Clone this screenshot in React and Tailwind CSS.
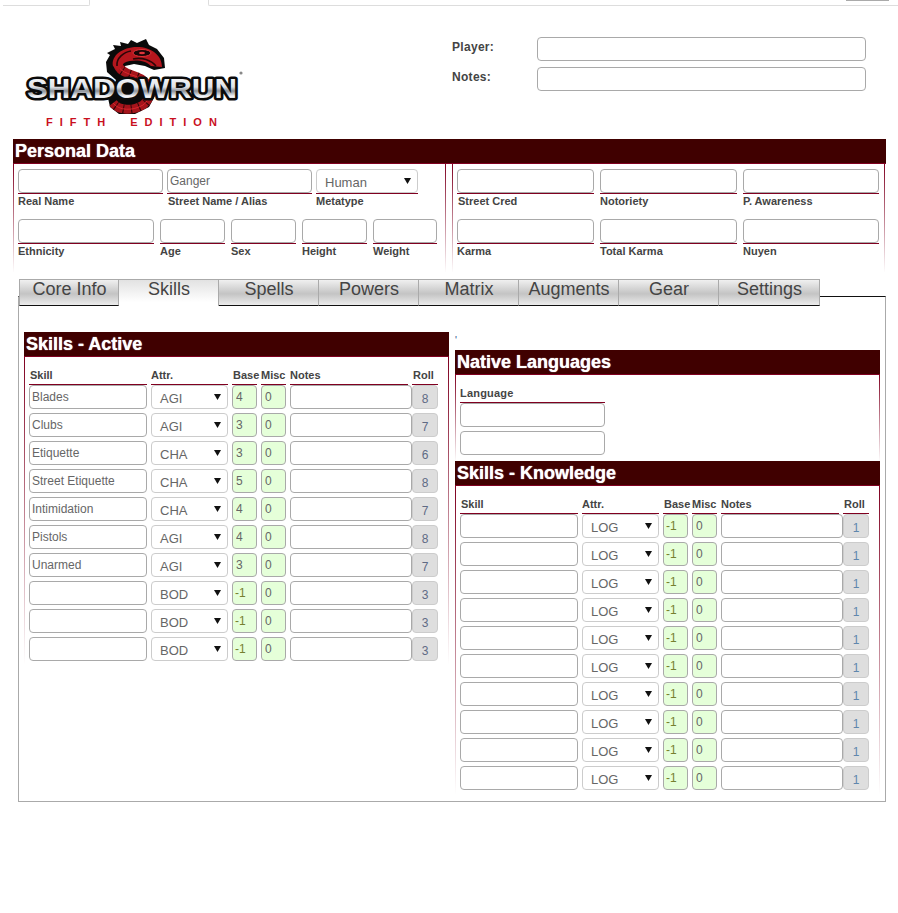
import React from "react";

const inputCls =
  "block w-full h-[24px] rounded-[4px] border border-[#a9a9a9] bg-white px-[2px] text-[12px] text-[#666] outline-none";

const snake =
  "M118 64 C119 74 135 74 143 80 C152 87 152 98 143 105 C133 111 119 111 113 103";

function Logo() {
  return (
    <svg width="220" height="90" viewBox="24 39 220 90" className="block">
      <defs>
        <linearGradient id="chrome" x1="0" y1="0" x2="0" y2="1">
          <stop offset="0" stopColor="#ffffff" />
          <stop offset="0.45" stopColor="#dfe3e8" />
          <stop offset="0.58" stopColor="#8d929a" />
          <stop offset="0.75" stopColor="#f4f6f9" />
          <stop offset="1" stopColor="#a4a9b1" />
        </linearGradient>
      </defs>
      <path
        d="M106 62 L110 55 L107 53 L115 49 L113 45 L121 46 L120 42 L128 44 L131 40 L137 43 L146 39 L149 45 L157 49 L164 58 L165 68 L154 70 L145 66 L134 64 L125 66 L126 72 L142 77 L152 85 L155 96 L149 107 L135 114 L119 114 L110 107 L108 98 L116 80 L107 72 Z"
        fill="#0a0a0a"
      />
      <path d={snake} fill="none" stroke="#a5141b" strokeWidth="9" />
      <path d={snake} fill="none" stroke="#2c0507" strokeWidth="9" strokeDasharray="1 7" />
      <path d={snake} fill="none" stroke="#d8262c" strokeWidth="1" />
      <path
        d="M113 66 C111 56 122 47 137 47 C151 47 162 55 162 67 L151 66 C145 60 133 59 124 63 L118 71 Z"
        fill="#b5161d"
      />
      <path d="M117 66 C116 58 124 52 131 51" fill="none" stroke="#2c0507" strokeWidth="1.6" />
      <path d="M133 59 C142 57 151 60 156 66" fill="none" stroke="#2c0507" strokeWidth="1.6" />
      <ellipse cx="142" cy="53" rx="9" ry="3.5" fill="#1a0506" stroke="#e0343a" strokeWidth="1" />
      <ellipse cx="142" cy="53" rx="3" ry="1.2" fill="#e0343a" />
      <text
        x="27"
        y="98"
        textLength="210"
        lengthAdjust="spacingAndGlyphs"
        fontFamily="'Liberation Sans', Arial, sans-serif"
        fontWeight="700"
        fontSize="28"
        fill="url(#chrome)"
        stroke="#0b0b0b"
        strokeWidth="5"
        strokeLinejoin="round"
        style={{ paintOrder: "stroke" }}
      >
        SHADOWRUN
      </text>
      <circle cx="241" cy="73" r="1.6" fill="#888" />
      <text
        x="46"
        y="126"
        letterSpacing="7"
        wordSpacing="8"
        fontFamily="'Liberation Sans', Arial, sans-serif"
        fontWeight="700"
        fontSize="11"
        fill="#c9101e"
      >
        FIFTH EDITION
      </text>
    </svg>
  );
}

function SectionHeader({ children }) {
  return (
    <div className="h-[25px] border-b border-[#800020] bg-[#400000] pl-[2px] text-[18px] font-bold leading-[25px] text-white [text-shadow:0_0_1px_#ffffff]">
      {children}
    </div>
  );
}

const fadeBody = "border-x border-solid [border-image:linear-gradient(#800020,#ffffff)_1]";

function Arrow() {
  return (
    <svg width="7" height="7" viewBox="0 0 7 7" className="absolute right-[6px] top-[7px]">
      <path d="M0 1 H7 L3.5 7 Z" fill="#111" />
    </svg>
  );
}

function Field({ label, value, w, select, labelPad = "" }) {
  return (
    <div style={{ width: w }} className="shrink-0">
      <div className="border-b border-[#800020]">
        {select ? (
          <div className="relative flex h-[24px] items-center rounded-[4px] border border-[#ccc] bg-white pl-[8px] pt-[3px] text-[13px] text-[#666]">
            {value}
            <Arrow />
          </div>
        ) : (
          <input className={inputCls} defaultValue={value} readOnly />
        )}
      </div>
      <div className={`h-[14px] text-[11px] font-bold leading-[14px] whitespace-nowrap text-[#444] ${labelPad}`}>{label}</div>
    </div>
  );
}

function ColLabel({ w, children, className = "" }) {
  return (
    <div
      style={{ width: w }}
      className={`h-[17px] shrink-0 border-b border-[#800020] text-[11px] font-bold leading-[14px] whitespace-nowrap text-[#444] ${className}`}
    >
      {children}
    </div>
  );
}

function SkillHead() {
  return (
    <div className="flex gap-[4px]">
      <ColLabel w={118} className="pl-[1px]">Skill</ColLabel>
      <ColLabel w={77}>Attr.</ColLabel>
      <ColLabel w={25} className="pl-[1px]">Base</ColLabel>
      <ColLabel w={25}>Misc</ColLabel>
      <ColLabel w={118}>Notes</ColLabel>
      <ColLabel w={26} className="pl-[1px]">Roll</ColLabel>
    </div>
  );
}

function SkillRow({ name = "", attr, base, misc = "0", roll, rollColor }) {
  const neg = String(base).startsWith("-");
  return (
    <div className="flex gap-[4px]">
      <input className={`${inputCls} !w-[118px] shrink-0`} defaultValue={name} readOnly />
      <div className="relative flex h-[24px] w-[77px] shrink-0 items-center rounded-[4px] border border-[#ccc] bg-white pl-[8px] pt-[3px] text-[13px] text-[#666]">
        {attr}
        <Arrow />
      </div>
      <input
        className={`block h-[24px] w-[25px] shrink-0 rounded-[4px] border border-[#a9a9a9] bg-[#e5ffd9] text-[12px] outline-none ${neg ? "pl-[2px] text-[#76802f]" : "pl-[3px] text-[#666]"}`}
        defaultValue={base}
        readOnly
      />
      <input
        className="block h-[24px] w-[25px] shrink-0 rounded-[4px] border border-[#a9a9a9] bg-[#e5ffd9] pl-[3px] text-[12px] text-[#666] outline-none"
        defaultValue={misc}
        readOnly
      />
      <input className={`${inputCls} !w-[122px] shrink-0`} readOnly />
      <div
        className={`-ml-[4px] flex h-[24px] w-[26px] shrink-0 items-center justify-center rounded-[4px] border border-[#ccc] bg-[#dedede] pt-[4px] text-[12px] ${rollColor}`}
      >
        {roll}
      </div>
    </div>
  );
}

const active = [
  ["Blades", "AGI", 4, 8],
  ["Clubs", "AGI", 3, 7],
  ["Etiquette", "CHA", 3, 6],
  ["Street Etiquette", "CHA", 5, 8],
  ["Intimidation", "CHA", 4, 7],
  ["Pistols", "AGI", 4, 8],
  ["Unarmed", "AGI", 3, 7],
  ["", "BOD", -1, 3],
  ["", "BOD", -1, 3],
  ["", "BOD", -1, 3],
];

const tabs = ["Core Info", "Skills", "Spells", "Powers", "Matrix", "Augments", "Gear", "Settings"];

export default function App() {
  return (
    <div className="h-[913px] w-[898px] overflow-hidden bg-white font-['Liberation_Sans',Arial,sans-serif]">
      {/* browser-tab strip */}
      <div className="flex h-[6px]">
        <div className="ml-[3px] w-[87px] rounded-br-[2px] border-r border-b border-[#ddd]" />
        <div className="w-[118px]" />
        <div className="flex flex-1 justify-end rounded-bl-[2px] border-b border-l border-[#ddd] pr-[9px]">
          <div className="h-[1px] w-[43px] bg-[#aaa]" />
        </div>
      </div>

      {/* top */}
      <div className="flex h-[133px]">
        <div className="ml-[24px] mt-[33px] w-[428px]">
          <Logo />
        </div>
        <div className="mt-[31px] grid grid-cols-[85px_329px] content-start gap-y-[6px]">
          <div className="text-[12px] font-bold leading-[20px] tracking-[0.3px] text-[#444]">Player:</div>
          <input className={inputCls} readOnly />
          <div className="text-[12px] font-bold leading-[20px] tracking-[0.3px] text-[#444]">Notes:</div>
          <input className={inputCls} readOnly />
        </div>
      </div>

      {/* personal data */}
      <div className="ml-[13px] w-[873px]">
        <SectionHeader>Personal Data</SectionHeader>
        <div className="flex gap-[6px]">
          <div className={`h-[108px] w-[433px] pl-[4px] pt-[5px] ${fadeBody}`}>
            <div className="flex gap-[4px]">
              <Field label="Real Name" w={145} />
              <Field label="Street Name / Alias" value="Ganger" w={145} labelPad="pl-[1px]" />
              <Field label="Metatype" value="Human" w={102} select />
            </div>
            <div className="mt-[11px] flex gap-[6px]">
              <Field label="Ethnicity" w={136} />
              <Field label="Age" w={65} />
              <Field label="Sex" w={65} />
              <Field label="Height" w={65} />
              <Field label="Weight" w={64} />
            </div>
          </div>
          <div className={`h-[108px] w-[433px] pl-[4px] pt-[5px] ${fadeBody}`}>
            <div className="flex gap-[6px]">
              <Field label="Street Cred" w={137} labelPad="pl-[1px]" />
              <Field label="Notoriety" w={137} />
              <Field label="P. Awareness" w={136} />
            </div>
            <div className="mt-[11px] flex gap-[6px]">
              <Field label="Karma" w={137} />
              <Field label="Total Karma" w={137} />
              <Field label="Nuyen" w={136} />
            </div>
          </div>
        </div>
      </div>

      {/* tabs */}
      <div className="ml-[18px] mt-[7px] w-[868px]">
        <div className="relative z-10 -mb-[10px] flex h-[27px] pl-[1px]">
          {tabs.map((t, i) =>
            t === "Skills" ? (
              <div
                key={t}
                className="h-[27px] w-[100px] border-t border-r border-[#aaa] bg-[linear-gradient(#e2e2e2,#ffffff_85%)] pl-[1px] text-center text-[18px] leading-[19px] text-[#444]"
              >
                {t}
              </div>
            ) : (
              <div
                key={t}
                className={`h-[27px] border-t border-r border-b border-t-[#aaa] border-r-[#aaa] border-b-[#111] bg-[linear-gradient(#f0f0f0,#c4c4c4_55%,#ececec)] pl-[1px] text-center text-[18px] leading-[19px] text-[#444] ${i === 0 ? "border-l border-l-[#aaa]" : ""} ${t === "Settings" ? "w-[101px]" : "w-[100px]"}`}
              >
                {t}
              </div>
            ),
          )}
        </div>
        <div className="flex h-[506px] gap-[6px] border border-[#aaa] border-t-[#111] pl-[5px] pt-[35px]">
          {/* left */}
          <div className="w-[425px]">
            <SectionHeader>Skills - Active</SectionHeader>
            <div className={`flex h-[307px] flex-col gap-[4px] pl-[4px] pt-[11px] ${fadeBody}`}>
              <div className="-mb-[4px]">
                <SkillHead />
              </div>
              {active.map((r, i) => (
                <SkillRow key={i} name={r[0]} attr={r[1]} base={r[2]} roll={r[3]} rollColor="text-[#5f6b85]" />
              ))}
            </div>
          </div>

          {/* right */}
          <div className="w-[425px]">
            <div className="h-[18px] text-[10px] leading-[18px] text-[#2b4a8a]">'</div>
            <SectionHeader>Native Languages</SectionHeader>
            <div className={`h-[86px] pl-[4px] pt-[11px] ${fadeBody}`}>
              <div className="h-[17px] w-[145px] border-b border-[#800020] text-[11px] font-bold leading-[14px] tracking-[0.2px] text-[#444]">
                Language
              </div>
              <div className="flex w-[145px] flex-col gap-[4px]">
                <input className={inputCls} readOnly />
                <input className={inputCls} readOnly />
              </div>
            </div>
            <SectionHeader>Skills - Knowledge</SectionHeader>
            <div className={`flex h-[308px] flex-col gap-[4px] pl-[4px] pt-[11px] ${fadeBody}`}>
              <div className="-mb-[4px]">
                <SkillHead />
              </div>
              {Array.from({ length: 10 }).map((_, i) => (
                <SkillRow key={i} attr="LOG" base="-1" roll={1} rollColor="text-[#5f86ad]" />
              ))}
            </div>
          </div>
        </div>
      </div>
    </div>
  );
}
